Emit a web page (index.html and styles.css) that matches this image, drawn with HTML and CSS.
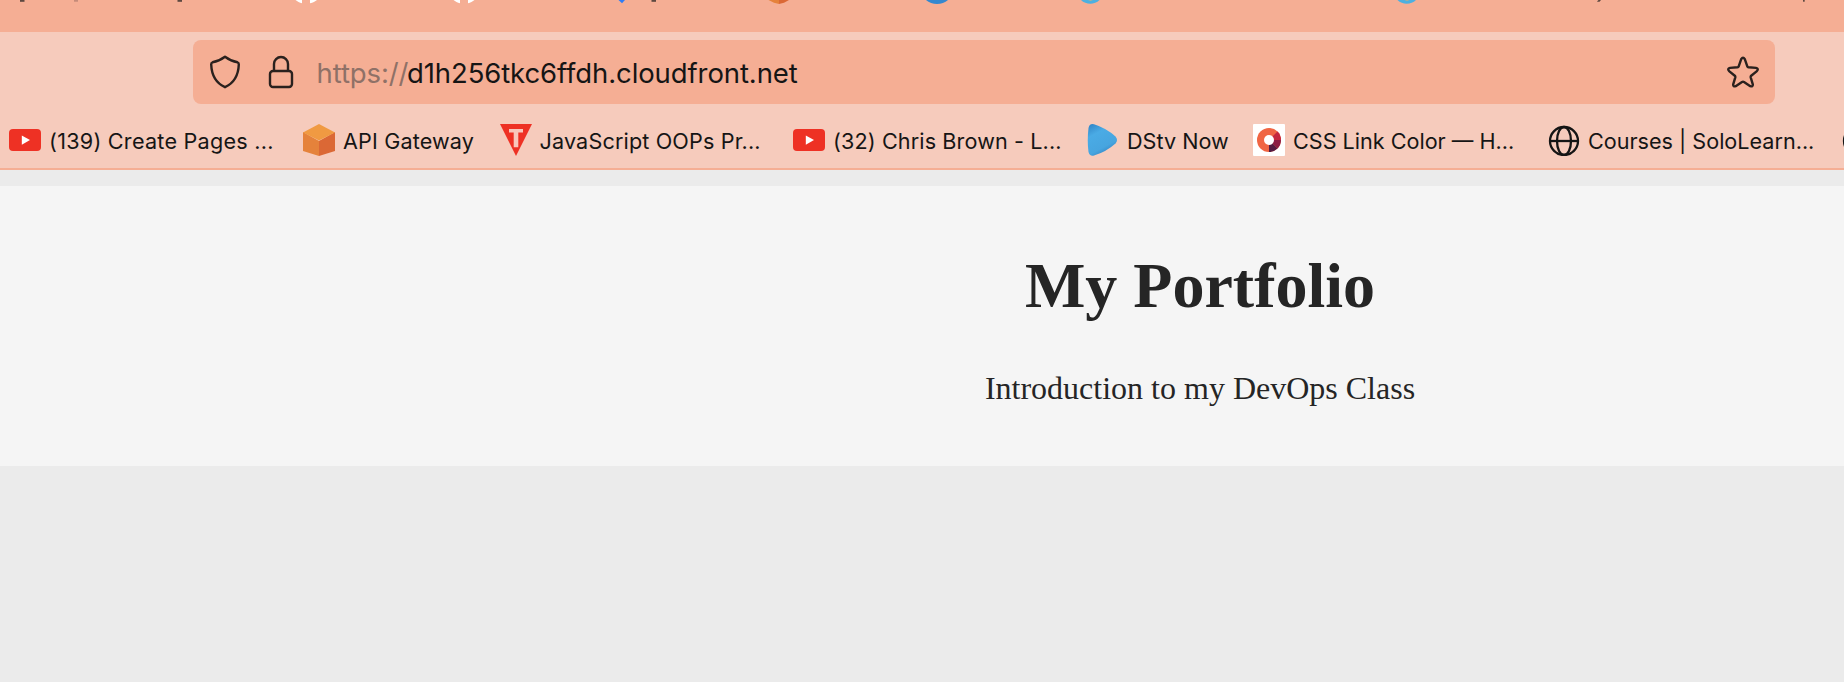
FILE: index.html
```html
<!DOCTYPE html>
<html lang="en">
<head>
<meta charset="utf-8">
<title>My Portfolio</title>
<link rel="stylesheet" href="styles.css">
</head>
<body>
<div class="tabs">
  <svg width="1844" height="32" viewBox="0 0 1844 32">
    <g fill="#5d4840"><rect x="20" y="0" width="4.500" height="1.800"/><rect x="177.500" y="0" width="4.500" height="1.800"/><rect x="651.500" y="0" width="4.500" height="1.800"/><path d="M1597 1.700h2.500l1.500-1.700h-2.500l-1 1z"/><rect x="1803" y="0" width="1.700" height="1.700"/></g>
    <rect x="74" y="0" width="4" height="1.700" fill="#c58b79"/>
    <path d="M295.500 0h6.500v3.200c-2.500-.6-4.600-1.600-6.500-3.200zM310 0h7c-1.900 1.500-4 2.600-7 3.200zM453.500 0h6.500v3.200c-2.500-.6-4.600-1.600-6.500-3.200zM468 0h6.500c-1.900 1.500-4 2.600-6.500 3.200z" fill="#fff"/>
    <path d="M618.500 0h6.500l-3 3.300z" fill="#2f7df6"/>
    <path d="M768.500 0H779v4l-5-1.200z" fill="#e5823b"/><path d="M779 0h10l-5 2.800-5 1.200z" fill="#db6835"/>
    <path d="M926 0h22c-6 5.300-16 5.300-22 0z" fill="#3488cf"/>
    <path d="M1081 0h18.500c-5 5-13.500 5-18.500 0z" fill="#4db0e0"/><path d="M1088 0h5l-2.500 1z" fill="#b7b08e"/>
    <path d="M1397.500 0h18.500c-5 5-13.500 5-18.500 0z" fill="#4db0e0"/><path d="M1404.500 0h5l-2.500 1z" fill="#b7b08e"/>
  </svg>
</div>
<div class="toolbar">
  <div class="urlbar">
    <svg class="shield" width="32" height="34" viewBox="0 0 32 34"><path d="M16 1.800Q22 6.300 28.500 7.300Q29.900 7.700 29.800 9.500C29.400 20 24.500 28.300 16 32.200C7.500 28.300 2.600 20 2.200 9.500Q2.100 7.700 3.500 7.300Q10 6.300 16 1.800Z"/></svg>
    <svg class="lock" width="26" height="34" viewBox="0 0 26 34"><rect x="2" y="16" width="22" height="16" rx="3"/><path d="M6 16V9a7 7 0 0 1 14 0v7"/></svg>
    <div class="url"><span class="scheme">https://</span><span class="host">d1h256tkc6ffdh.cloudfront.net</span></div>
    <svg class="star" width="32" height="32" viewBox="0 0 32 32"><path d="M14.200 3.200Q16 .2 17.800 3.200L20.300 10.300Q20.600 11.200 21.500 11.300L29 11.900Q32 12.600 29.900 15.100L24.200 19.700Q23.500 20.400 23.700 21.300L25.800 28.300Q26.100 31 23.300 30.200L17 26Q16 25.400 15 26L8.700 30.200Q5.900 31 6.200 28.300L8.300 21.300Q8.500 20.400 7.800 19.700L2.100 15.100Q0 12.600 3 11.900L10.500 11.300Q11.400 11.200 11.700 10.300Z"/></svg>
  </div>
  <div class="bookmarks">
    <div class="bm b1"><svg width="32" height="32" viewBox="0 0 32 32"><rect y="5" width="32" height="22" rx="4" fill="#ee3124"/><path d="M12.800 11.500v9.200l8.200-4.600z" fill="#fff"/></svg><span>(139) Create Pages ...</span></div>
    <div class="bm b2"><svg width="32" height="32" viewBox="0 0 32 32"><path d="M0 8l16 9v15L0 27z" fill="#e5823b"/><path d="M32 8l-16 9v15l16-5z" fill="#db6835"/><path d="M16 0l16 8.500L16 16.500 0 8.500z" fill="#f09a42"/></svg><span>API Gateway</span></div>
    <div class="bm b3"><svg width="32" height="32" viewBox="0 0 32 32"><path d="M0 0h32L16 32z" fill="#ee3124"/><path d="M9 5h14v3.500h-4.700v14.700h-4.600V8.500H9z" fill="#f9c7bb"/></svg><span>JavaScript OOPs Pr...</span></div>
    <div class="bm b4"><svg width="32" height="32" viewBox="0 0 32 32"><rect y="5" width="32" height="22" rx="4" fill="#ee3124"/><path d="M12.800 11.500v9.200l8.200-4.600z" fill="#fff"/></svg><span>(32) Chris Brown - L...</span></div>
    <div class="bm b5"><svg width="32" height="32" viewBox="0 0 32 32"><defs><linearGradient id="play" x1="0" y1="0" x2=".5" y2="1"><stop offset="0" stop-color="#2f81c3"/><stop offset=".35" stop-color="#4aabe5"/><stop offset=".8" stop-color="#47a5df"/><stop offset="1" stop-color="#3488c8"/></linearGradient></defs><path d="M1.500 4Q2.500-.8 7 .3Q19 4 28.500 12.500Q31.500 16 28.500 19.500Q19 28 7 31.500Q2.500 32.500 1.500 28Q0 16 1.500 4z" fill="url(#play)"/></svg><span>DStv Now</span></div>
    <div class="bm b6"><svg width="32" height="32" viewBox="0 0 32 32"><rect width="32" height="32" rx="1" fill="#fff"/><circle cx="16" cy="16" r="12" fill="#f06543"/><path d="M16 16l8.500-8.500A12 12 0 0 1 28 16z" fill="#c5283e"/><path d="M16 16h12a12 12 0 0 1-3.500 8.500z" fill="#8c1d44"/><path d="M16 16l8.500 8.500A12 12 0 0 1 16 28z" fill="#531b42"/><circle cx="16" cy="16" r="5" fill="#fff"/></svg><span>CSS Link Color — H...</span></div>
    <div class="bm b7"><svg class="globe" width="32" height="32" viewBox="0 0 32 32"><circle cx="16" cy="17" r="14"/><ellipse cx="16" cy="17" rx="7" ry="14"/><path d="M2 17h28"/></svg><span>Courses | SoloLearn...</span></div>
    <div class="bm b8"><svg class="globe" width="32" height="32" viewBox="0 0 32 32"><circle cx="16" cy="17" r="14"/></svg></div>
  </div>
</div>
<main class="page">
  <header class="hero">
    <h1>My Portfolio</h1>
    <p>Introduction to my DevOps Class</p>
  </header>
</main>
</body>
</html>
```
FILE: styles.css
```css
* { box-sizing: border-box; }
body { margin: 0; height: 682px; overflow: hidden; background: #ebebeb; font-family: Inter, "Liberation Sans", sans-serif; color: #151515; }
svg { display: block; flex: none; }
.tabs { height: 32px; background: #f5ae94; }
.toolbar { height: 138px; padding-top: 8px; background: #f6cbbc; border-bottom: 2px solid #f5ae94; }
.urlbar { display: flex; align-items: center; width: 1582px; height: 64px; margin-left: 193px; padding: 0 16px; background: #f5ae94; border-radius: 8px; }
.shield, .lock, .star { fill: none; stroke: #2a211e; stroke-width: 2.4; stroke-linejoin: round; }
.lock { margin-left: 27px; }
.url { flex: 1; display: flex; margin-left: 22.500px; font-size: 27.500px; line-height: 64px; padding-top: 2px; white-space: pre; }
.scheme { width: 90.500px; color: #8f7167; letter-spacing: -0.1px; }
.host { letter-spacing: -0.1px; }
.bookmarks { display: flex; height: 32px; margin-top: 20px; padding-left: 9px; overflow: hidden; }
.bm { display: flex; flex: none; gap: 8px; font-size: 21.600px; line-height: 34px; white-space: nowrap; }
.b1 { width: 294px; letter-spacing: 0.250px; }
.b2 { width: 196.500px; letter-spacing: 0.150px; }
.b3 { width: 293.500px; letter-spacing: 0.150px; }
.b4 { width: 294px; letter-spacing: 0.120px; }
.b5 { width: 166px; }
.b6 { width: 295px; }
.b7 { width: 294px; }
.b8 { width: 2px; overflow: hidden; }
.globe { fill: none; stroke: #151515; stroke-width: 2.3; }
.page { padding-top: 16px; }
.hero { height: 280px; padding: 63px 0 0 556px; background: #f5f5f5; color: #252525; text-align: center; font-family: "Liberation Serif", "Times New Roman", serif; }
.hero h1 { margin: 0; font-size: 64px; line-height: 74px; }
.hero p { margin: 47px 0 0; font-size: 32px; line-height: 37px; }
```
